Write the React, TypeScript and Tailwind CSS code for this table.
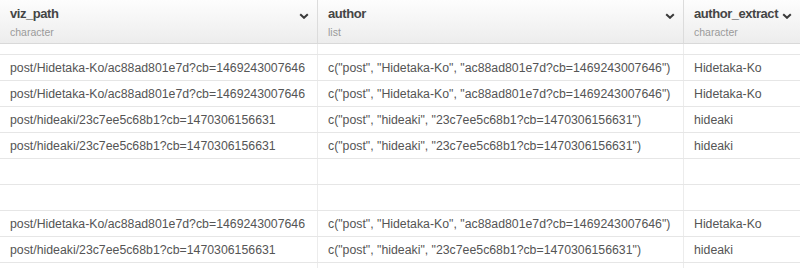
const cols = [
  { name: "viz_path", type: "character", w: "w-[318px]" },
  { name: "author", type: "list", w: "w-[366px]" },
  { name: "author_extract", type: "character", w: "flex-1" },
];

const A = ["post/Hidetaka-Ko/ac88ad801e7d?cb=1469243007646", 'c("post", "Hidetaka-Ko", "ac88ad801e7d?cb=1469243007646")', "Hidetaka-Ko"];
const B = ["post/hideaki/23c7ee5c68b1?cb=1470306156631", 'c("post", "hideaki", "23c7ee5c68b1?cb=1470306156631")', "hideaki"];
const E = ["", "", ""];

const rows = [A, A, B, B, E, E, A, B, E];

function Chevron() {
  return (
    <svg width="10" height="6" viewBox="0 0 10 6" className="shrink-0">
      <polyline points="1.2,1.2 5,4.8 8.8,1.2" fill="none" stroke="#3a3a3a" strokeWidth="2" />
    </svg>
  );
}

export default function App() {
  return (
    <div className="w-[800px] h-[268px] overflow-hidden bg-white font-['Liberation_Sans',Arial,sans-serif]">
      <div className="flex h-[44px] border-b border-[#d9d9d9] bg-gradient-to-b from-[#fdfdfd] to-[#ededed]">
        {cols.map((c, i) => (
          <div key={i} className={`${c.w} shrink-0 flex items-start justify-between pl-[10px] pr-[8px] pt-[6px] ${i < 2 ? "border-r border-[#dcdcdc]" : ""}`}>
            <div className="leading-none">
              <div className="text-[13px] font-bold text-[#454545] leading-[16px] tracking-[-0.45px]">{c.name}</div>
              <div className="text-[10.5px] text-[#9a9a9a] leading-[14px] mt-[3px]">{c.type}</div>
            </div>
            <div className="pt-[7px]"><Chevron /></div>
          </div>
        ))}
      </div>
      <div className="flex h-[11px] border-b border-[#e6e6e6]">
        {cols.map((c, i) => (
          <div key={i} className={`${c.w} shrink-0 ${i < 2 ? "border-r border-[#ececec]" : ""}`} />
        ))}
      </div>
      {rows.map((r, ri) => (
        <div key={ri} className="flex h-[26px] border-b border-[#e6e6e6]">
          {cols.map((c, i) => (
            <div key={i} className={`${c.w} shrink-0 flex items-center pl-[10px] pt-[1px] text-[12.3px] text-[#555] whitespace-nowrap overflow-hidden ${i < 2 ? "border-r border-[#ececec]" : ""}`}>
              {r[i]}
            </div>
          ))}
        </div>
      ))}
    </div>
  );
}
